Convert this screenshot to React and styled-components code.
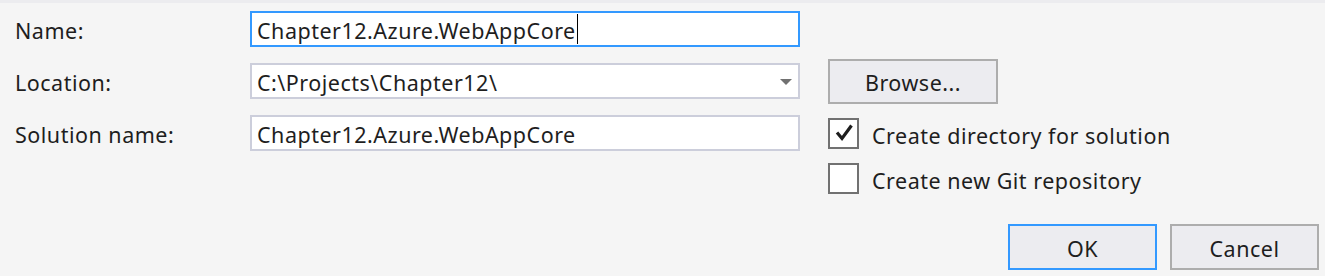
import React from 'react';
import styled, { createGlobalStyle } from 'styled-components';

const GlobalStyle = createGlobalStyle`
  body {
    margin: 0;
    background: #f5f5f5;
    font-family: "Noto Sans", "Open Sans", "DejaVu Sans", sans-serif;
    color: #1e1e1e;
  }
`;

const Page = styled.div`
  width: 1325px;
  height: 276px;
  background: #f5f5f5;
  border-top: 3px solid #ececef;
  box-sizing: border-box;
  overflow: hidden;
  font-size: 21.5px;
  letter-spacing: 0.5px;
`;

const Form = styled.div`
  display: grid;
  grid-template-columns: 207px 550px auto;
  column-gap: 28px;
  row-gap: 16px;
  padding: 8px 0 0 15px;
`;

const Label = styled.label`
  height: 36px;
  line-height: 36px;
  padding-top: 2px;
  box-sizing: border-box;
  align-self: start;
`;

const Field = styled.div`
  position: relative;
  height: 36px;
  box-sizing: border-box;
  border: 2px solid ${(p) => (p.$focused ? '#3399ff' : '#cccedb')};
  background: #fff;
  display: flex;
  align-items: center;
  padding: 2px 0 0 5px;
  white-space: nowrap;
`;

const Caret = styled.span`
  display: inline-block;
  width: 1px;
  height: 30px;
  background: #000;
  margin: -2px 0 0 1px;
`;

const Arrow = styled.span`
  position: absolute;
  right: 6px;
  top: 14px;
  width: 0;
  height: 0;
  border-left: 6px solid transparent;
  border-right: 6px solid transparent;
  border-top: 6px solid #717171;
`;

const Extra = styled.div`
  height: ${(p) => (p.$fixed ? '36px' : 'auto')};
  display: flex;
  align-items: center;
  margin-top: ${(p) => p.$offset || 0}px;
`;

const Button = styled.button`
  flex: none;
  width: ${(p) => p.$width || 149}px;
  height: ${(p) => p.$height || 46}px;
  box-sizing: border-box;
  border: 2px solid ${(p) => (p.$primary ? '#3399ff' : '#adadad')};
  background: #ececf0;
  font-family: inherit;
  font-size: inherit;
  letter-spacing: inherit;
  color: #1e1e1e;
  padding: 2px 0 0;
  margin: 0;
`;

const Check = styled.div`
  display: flex;
  align-items: center;
  gap: 13px;
  white-space: nowrap;
`;

const CheckText = styled.span`
  padding-top: 5px;
`;

const Box = styled.span`
  flex: none;
  width: 31px;
  height: 31px;
  box-sizing: border-box;
  border: 2px solid #717171;
  background: #fff;
  display: flex;
`;

const Footer = styled.div`
  display: flex;
  justify-content: flex-end;
  gap: 13px;
  padding-right: 6px;
  margin-top: 29px;
`;

function CheckBox({ checked, children }) {
  return (
    <Check>
      <Box>
        {checked && (
          <svg width='27' height='27' viewBox='0 0 27 27'>
            <path d='M7 12.5 L12 18.5 L21.5 5.5' fill='none' stroke='#1e1e1e' strokeWidth='3.2' strokeLinejoin='miter' />
          </svg>
        )}
      </Box>
      <CheckText>{children}</CheckText>
    </Check>
  );
}

export default function App() {
  return (
    <Page>
      <GlobalStyle />
      <Form>
        <Label>Name:</Label>
        <Field $focused>
          Chapter12.Azure.WebAppCore
          <Caret />
        </Field>
        <div />

        <Label>Location:</Label>
        <Field>
          C:\Projects\Chapter12\
          <Arrow />
        </Field>
        <Extra $fixed>
          <Button $width={170} $height={45}>Browse...</Button>
        </Extra>

        <Label>Solution name:</Label>
        <Field>Chapter12.Azure.WebAppCore</Field>
        <Extra $offset={0}>
          <CheckBox checked>Create directory for solution</CheckBox>
        </Extra>

        <div />
        <div />
        <Extra $offset={-6}>
          <CheckBox>Create new Git repository</CheckBox>
        </Extra>
      </Form>
      <Footer>
        <Button $primary>OK</Button>
        <Button>Cancel</Button>
      </Footer>
    </Page>
  );
}
